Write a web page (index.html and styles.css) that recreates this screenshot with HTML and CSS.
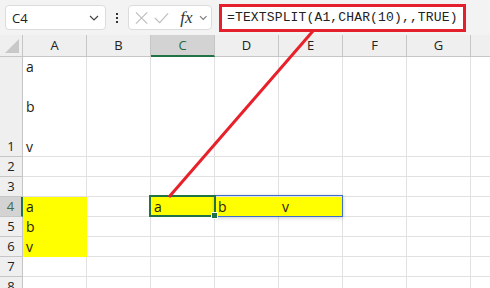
FILE: index.html
```html
<!DOCTYPE html>
<html lang="en">
<head>
    <meta charset="UTF-8">
    <title>TEXTSPLIT</title>
    <link rel="stylesheet" href="styles.css">
</head>
<body>
    <div class="toolbar">
        <div class="namebox">
            <span>C4</span>
            <svg class="chev" width="10" height="6" viewBox="0 0 10 6"><path d="M1 1l4 4 4-4" fill="none" stroke="#444" stroke-width="1.2"/></svg>
        </div>
        <div class="dots"><i></i><i></i><i></i></div>
        <div class="fxbox">
            <svg width="14" height="14" viewBox="0 0 14 14"><path d="M1 1l12 12M13 1L1 13" stroke="#bdbdbd" stroke-width="1.2"/></svg>
            <svg width="16" height="14" viewBox="0 0 16 14"><path d="M1 7l5 5L15 2" fill="none" stroke="#bdbdbd" stroke-width="1.2"/></svg>
            <span class="fx">fx</span>
            <svg width="9" height="6" viewBox="0 0 9 6"><path d="M1 1l3.5 3.5L8 1" fill="none" stroke="#777" stroke-width="1.1"/></svg>
        </div>
        <div class="formula">=TEXTSPLIT(A1,CHAR(10),,TRUE)</div>
    </div>

    <div class="sheet">
        <div class="grid">
            <div class="corner"><svg width="14" height="14" viewBox="0 0 14 14"><path d="M14 0V14H0z" fill="#c8c8c8"/></svg></div>
            <div class="colhead">A</div>
            <div class="colhead">B</div>
            <div class="colhead active">C</div>
            <div class="colhead">D</div>
            <div class="colhead">E</div>
            <div class="colhead">F</div>
            <div class="colhead">G</div>
            <div class="colhead"></div>

            <div class="rowhead bottom">1</div>
            <div class="cell multi">a

b

v</div>
            <div class="cell"></div><div class="cell"></div><div class="cell"></div><div class="cell"></div><div class="cell"></div><div class="cell"></div><div class="cell"></div>

            <div class="rowhead">2</div>
            <div class="cell"></div><div class="cell"></div><div class="cell"></div><div class="cell"></div><div class="cell"></div><div class="cell"></div><div class="cell"></div><div class="cell"></div>

            <div class="rowhead">3</div>
            <div class="cell"></div><div class="cell"></div><div class="cell"></div><div class="cell"></div><div class="cell"></div><div class="cell"></div><div class="cell"></div><div class="cell"></div>

            <div class="rowhead active">4</div>
            <div class="cell yellow">a</div>
            <div class="cell"></div>
            <div class="cell yellow">a</div>
            <div class="cell yellow">b</div>
            <div class="cell yellow">v</div>
            <div class="cell"></div><div class="cell"></div><div class="cell"></div>

            <div class="rowhead">5</div>
            <div class="cell yellow">b</div>
            <div class="cell"></div><div class="cell"></div><div class="cell"></div><div class="cell"></div><div class="cell"></div><div class="cell"></div><div class="cell"></div>

            <div class="rowhead">6</div>
            <div class="cell yellow">v</div>
            <div class="cell"></div><div class="cell"></div><div class="cell"></div><div class="cell"></div><div class="cell"></div><div class="cell"></div><div class="cell"></div>

            <div class="rowhead">7</div>
            <div class="cell"></div><div class="cell"></div><div class="cell"></div><div class="cell"></div><div class="cell"></div><div class="cell"></div><div class="cell"></div><div class="cell"></div>

            <div class="rowhead">8</div>
            <div class="cell"></div><div class="cell"></div><div class="cell"></div><div class="cell"></div><div class="cell"></div><div class="cell"></div><div class="cell"></div><div class="cell"></div>
        </div>

        <!-- spill range and active cell -->
        <div class="spill"></div>
        <div class="selected"><span class="handle"></span></div>
    </div>

    <!-- callout line from C4 to the formula -->
    <svg class="arrow" width="490" height="288" viewBox="0 0 490 288">
        <line x1="169" y1="197" x2="313" y2="31" stroke="#e8202a" stroke-width="3"/>
    </svg>
</body>
</html>
```

FILE: styles.css
```css
body {
    margin: 0;
    width: 490px;
    height: 288px;
    overflow: hidden;
    background: #fff;
    font-family: "Open Sans", "Noto Sans", sans-serif;
    position: relative;
}

.toolbar {
    height: 35px;
    background: #f3f3f3;
    display: flex;
    align-items: center;
    padding-left: 5px;
    box-sizing: border-box;
}

.namebox {
    width: 101px;
    height: 25px;
    box-sizing: border-box;
    background: #fff;
    border: 1px solid #dcdcdc;
    border-radius: 4px;
    display: flex;
    align-items: center;
    justify-content: space-between;
    padding: 0 6px 0 6px;
    font-size: 13px;
    color: #222;
}

.dots {
    width: 22px;
    display: flex;
    flex-direction: column;
    align-items: center;
    gap: 2px;
}

.dots i {
    width: 2px;
    height: 2px;
    background: #333;
}

.fxbox {
    width: 84px;
    height: 25px;
    box-sizing: border-box;
    background: #fff;
    border: 1px solid #dcdcdc;
    border-radius: 4px;
    display: flex;
    align-items: center;
    padding: 0 4px 0 6px;
    gap: 6px;
}

.fx {
    font-family: "Liberation Serif", serif;
    font-style: italic;
    font-size: 17px;
    color: #333;
    margin-left: 5px;
    line-height: 1;
}

.formula {
    margin-left: 7px;
    width: 247px;
    height: 28px;
    box-sizing: border-box;
    background: #fff;
    border: 3px solid #e3202b;
    font-family: "Liberation Mono", monospace;
    font-size: 13px;
    color: #222;
    display: flex;
    align-items: center;
    padding-left: 5px;
    letter-spacing: 0.15px;
}

.sheet {
    position: relative;
}

.grid {
    display: grid;
    grid-template-columns: 23px repeat(8, 64px);
    grid-template-rows: 22px 100px repeat(7, 20px);
}

.grid > div {
    box-sizing: border-box;
    border-right: 1px solid #e1e1e1;
    border-bottom: 1px solid #e1e1e1;
}

.corner {
    background: #efefef;
    display: flex;
    align-items: flex-end;
    justify-content: flex-end;
    padding: 0 3px 3px 0;
}

.grid > .corner,
.grid > .colhead,
.grid > .rowhead {
    border-color: #c6c6c6;
}

.colhead {
    background: #efefef;
    font-size: 13px;
    color: #222;
    text-align: center;
    line-height: 21px;
}

.colhead.active {
    background: #d3d3d3;
    color: #1e6b3e;
    border-bottom: 2px solid #217346;
}

.rowhead {
    background: #efefef;
    font-size: 13px;
    color: #222;
    text-align: center;
    line-height: 19px;
}

.rowhead.bottom {
    display: flex;
    align-items: flex-end;
    justify-content: center;
}

.rowhead.active {
    background: #d3d3d3;
    color: #3e6b4e;
    border-right: 2px solid #217346;
}

.cell {
    font-size: 14px;
    color: #2a1a10;
    padding-left: 3px;
    line-height: 19px;
}

.cell.multi {
    white-space: pre-line;
    line-height: 20px;
}

.grid > .cell.yellow {
    background: #ffff00;
    border-color: #ffff00;
}

.spill {
    position: absolute;
    left: 214px;
    top: 160px;
    width: 129px;
    height: 22px;
    box-sizing: border-box;
    border: 1px solid #3d6ec9;
    box-shadow: 0 1px 4px rgba(0, 0, 0, 0.2);
}

.selected {
    position: absolute;
    left: 149px;
    top: 160px;
    width: 67px;
    height: 22px;
    box-sizing: border-box;
    border: 2px solid #217346;
}

.handle {
    position: absolute;
    right: -4px;
    bottom: -4px;
    width: 5px;
    height: 5px;
    background: #217346;
    border: 1px solid #fff;
}

.arrow {
    position: absolute;
    left: 0;
    top: 0;
}
```
